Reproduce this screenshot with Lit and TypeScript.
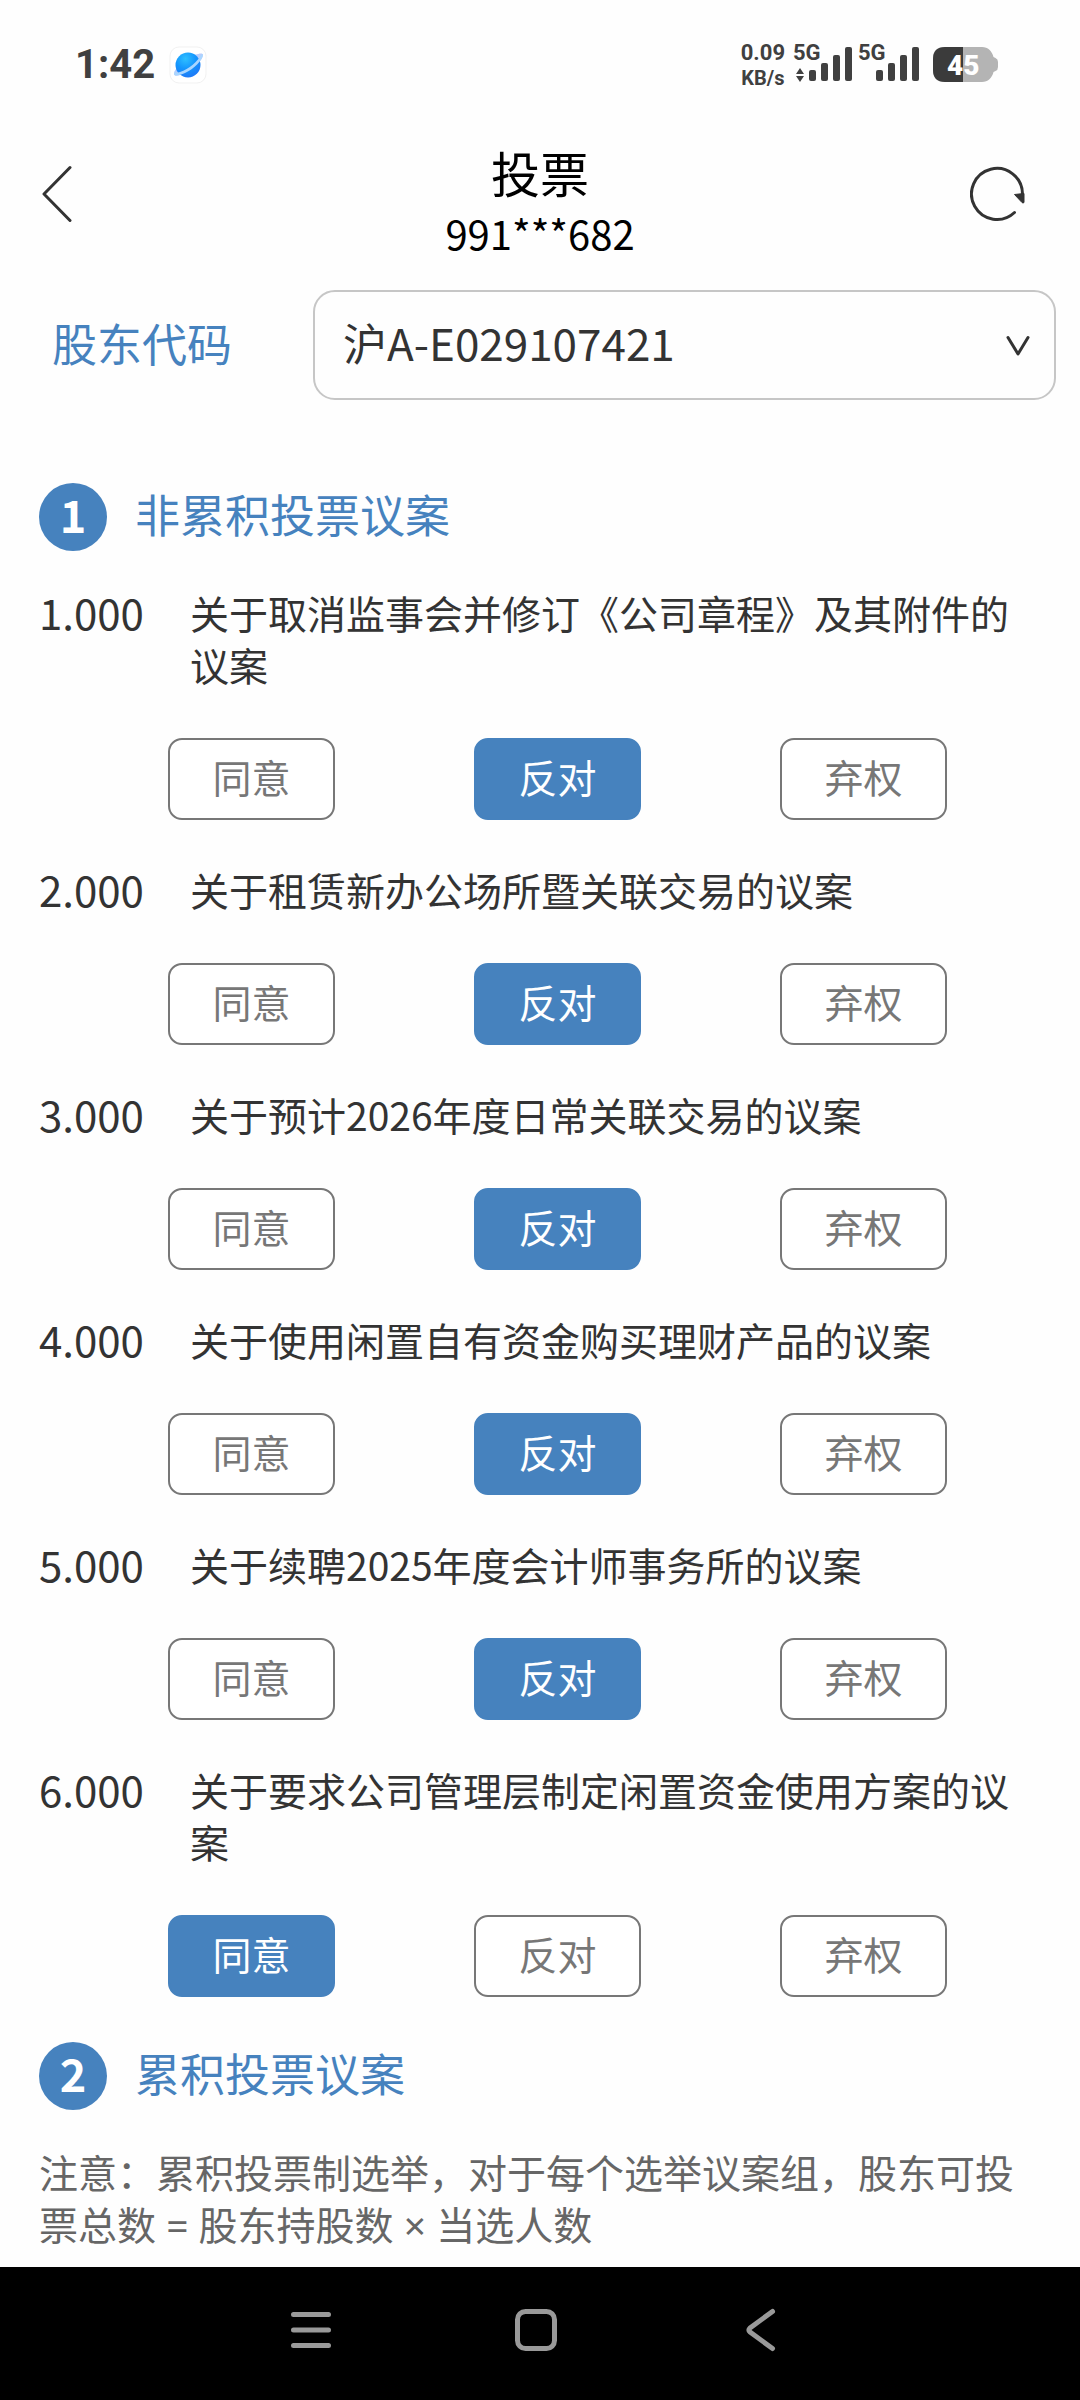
import { LitElement, html, css, svg } from "lit";
import { customElement, property, state } from "lit/decorators.js";
import { classMap } from "lit/directives/class-map.js";

type Choice = "同意" | "反对" | "弃权";

interface Proposal {
  no: string;
  title: string;
  choice: Choice;
}

const CHOICES: Choice[] = ["同意", "反对", "弃权"];

@customElement("status-bar")
class StatusBar extends LitElement {
  static styles = css`
    :host {
      display: flex;
      align-items: center;
      justify-content: space-between;
      height: 130px;
      padding: 0 81px 0 75px;
      color: #404040;
      font-family: Roboto, sans-serif;
      font-weight: 700;
    }
    .left,
    .right {
      display: flex;
      align-items: center;
    }
    .left {
      gap: 14px;
    }
    .time {
      font-size: 40px;
      line-height: 48px;
    }
    .speed {
      display: flex;
      flex-direction: column;
      align-items: center;
      padding-right: 8px;
      font-size: 22px;
      line-height: 26px;
    }
    .unit {
      font-size: 20px;
      line-height: 24px;
    }
    .signal {
      margin-right: 6px;
    }
    .battery {
      margin-left: 8px;
    }
    svg {
      display: block;
      font-family: inherit;
    }
  `;

  private bars(x: number) {
    return svg`
      <rect x=${x} y="29" width="7" height="11" rx="2" />
      <rect x=${x + 12} y="22" width="7" height="18" rx="2" />
      <rect x=${x + 24} y="14" width="7" height="26" rx="2" />
      <rect x=${x + 36} y="6" width="7" height="34" rx="2" />`;
  }

  render() {
    return html`
      <div class="left">
        <span class="time">1:42</span>
        <svg width="38" height="38" viewBox="0 0 38 38" aria-hidden="true">
          <defs>
            <radialGradient id="globe" cx="0.4" cy="0.25" r="0.8">
              <stop offset="0" stop-color="#2fc0ff" />
              <stop offset="0.5" stop-color="#1496fd" />
              <stop offset="1" stop-color="#1f76f6" />
            </radialGradient>
          </defs>
          <rect x="1" y="1" width="36" height="36" rx="9" fill="#fff" stroke="#f1f1f1" />
          <path d="M26 9c5-2 8-2 8 0 0 5-9 14-18 18-6 3-11 4-11 1 0-2 1-4 3-6z" fill="#b9cdfb" />
          <circle cx="19" cy="19" r="12.5" fill="url(#globe)" />
          <path d="M6 25c0 2 2 2 5 1 9-3 18-11 21-17l2-1c0 6-9 15-18 19-6 3-11 3-11 1z" fill="#a9d6ff" />
        </svg>
      </div>
      <div class="right">
        <div class="speed"><span>0.09</span><span class="unit">KB/s</span></div>
        <svg class="signal" width="59" height="72" viewBox="0 -12 59 72" fill="#404040">
          <text x="0" y="19" font-size="22">5G</text>
          <path d="M7 27l4 6h-8zM7 41l4-6h-8z" />
          ${this.bars(16)}
        </svg>
        <svg class="signal" width="61" height="72" viewBox="0 -12 61 72" fill="#404040">
          <text x="0" y="19" font-size="22">5G</text>
          ${this.bars(18)}
        </svg>
        <svg class="battery" width="66" height="52" viewBox="0 -8 66 52">
          <path d="M12 0h37c6 0 10 4 11.500 10l2 1q2.500 1 2.500 4v5q0 3-2.500 4l-2 1c-1.500 6-5.500 10-11.500 10h-37q-12 0-12-12v-11q0-12 12-12z" fill="#b4b4b4" />
          <path d="M12 0h18v35h-18q-12 0-12-12v-11q0-12 12-12z" fill="#3b3b3b" />
          <text x="14" y="28" font-size="28" font-weight="900" fill="#fff">45</text>
        </svg>
      </div>
    `;
  }
}

@customElement("page-header")
class PageHeader extends LitElement {
  static styles = css`
    :host {
      display: grid;
      grid-template-columns: 1fr auto 1fr;
      align-items: start;
      padding: 12px 42px 28px;
      color: #000;
    }
    .titles {
      text-align: center;
      line-height: 60px;
    }
    h1 {
      margin: 0;
      font-size: 49px;
      font-weight: 400;
    }
    p {
      margin: 0;
      font-size: 40px;
      line-height: 62px;
    }
    button {
      display: block;
      padding: 23px 0;
      border: 0;
      background: none;
      cursor: pointer;
    }
    .refresh {
      justify-self: end;
      padding-right: 12px;
    }
    svg {
      display: block;
    }
  `;

  render() {
    return html`
      <button type="button" aria-label="返回">
        <svg width="32" height="58" viewBox="0 0 32 58" fill="none" stroke="#333" stroke-width="3" stroke-linecap="round" stroke-linejoin="round">
          <path d="M28 2.500L2 29l26 26.500" />
        </svg>
      </button>
      <div class="titles">
        <h1>投票</h1>
        <p>991***682</p>
      </div>
      <button class="refresh" type="button" aria-label="刷新">
        <svg width="56" height="58" viewBox="0 0 56 58">
          <path d="M44.500 47.500A25.500 25.500 0 1 1 52.500 29" fill="none" stroke="#333" stroke-width="3" stroke-linecap="round" />
          <path d="M44.500 29.500l9.500-1v9q-1 1-2 0z" fill="#333" stroke="#333" stroke-linejoin="round" />
        </svg>
      </button>
    `;
  }
}

@customElement("section-title")
class SectionTitle extends LitElement {
  @property() index = "";
  @property() label = "";

  static styles = css`
    :host {
      display: flex;
      align-items: center;
      gap: 28px;
      color: #4682be;
    }
    .badge {
      display: flex;
      justify-content: center;
      box-sizing: border-box;
      width: 68px;
      height: 68px;
      border-radius: 50%;
      background: #4682be;
      color: #fff;
      font-size: 45px;
      font-weight: 700;
      line-height: 62px;
    }
    h2 {
      margin: 0;
      font-size: 45px;
      font-weight: 400;
      line-height: 60px;
      padding-bottom: 6px;
    }
  `;

  render() {
    return html`<span class="badge">${this.index}</span><h2>${this.label}</h2>`;
  }
}

@customElement("proposal-item")
class ProposalItem extends LitElement {
  @property({ attribute: false }) proposal!: Proposal;
  @state() private picked?: Choice;

  static styles = css`
    :host {
      display: block;
      color: #333;
    }
    .head {
      display: grid;
      grid-template-columns: 151px 1fr;
      line-height: 52px;
    }
    .no {
      font-size: 42px;
    }
    h3 {
      margin: 0;
      font-size: 39px;
      font-weight: 400;
    }
    .choices {
      display: flex;
      justify-content: space-between;
      margin-top: 48px;
      padding: 0 85px 0 129px;
    }
    .choice {
      width: 167px;
      height: 82px;
      padding: 0 0 6px;
      border: 2px solid #777;
      border-radius: 14px;
      background: #fff;
      color: #777;
      font: inherit;
      font-size: 39px;
      line-height: 52px;
      cursor: pointer;
    }
    .choice.on {
      border-color: #4682be;
      background: #4682be;
      color: #fff;
    }
  `;

  render() {
    const current = this.picked ?? this.proposal.choice;
    return html`
      <div class="head">
        <span class="no">${this.proposal.no}</span>
        <h3>${this.proposal.title}</h3>
      </div>
      <div class="choices" role="group" aria-label=${this.proposal.title}>
        ${CHOICES.map(
          (c) => html`<button
            type="button"
            class=${classMap({ choice: true, on: c === current })}
            aria-pressed=${c === current ? "true" : "false"}
            @click=${() => (this.picked = c)}
          >${c}</button>`
        )}
      </div>
    `;
  }
}

@customElement("system-nav")
class SystemNav extends LitElement {
  static styles = css`
    :host {
      display: flex;
      align-items: center;
      justify-content: center;
      gap: 177px;
      height: 133px;
      box-sizing: border-box;
      padding: 0 8px 8px 0;
      background: #000;
    }
    button {
      padding: 0;
      border: 0;
      background: none;
    }
    svg {
      display: block;
      fill: none;
      stroke: #999;
      stroke-width: 5;
      stroke-linecap: round;
      stroke-linejoin: round;
    }
  `;

  render() {
    return html`
      <button type="button" aria-label="最近任务">
        <svg width="48" height="48" viewBox="0 0 48 48"><path d="M6.500 8.500h35M6.500 24h35M6.500 39.500h35" /></svg>
      </button>
      <button type="button" aria-label="主屏幕">
        <svg width="48" height="48" viewBox="0 0 48 48"><rect x="5.500" y="5.500" width="37" height="37" rx="8" /></svg>
      </button>
      <button type="button" aria-label="返回">
        <svg width="48" height="48" viewBox="0 0 48 48"><path d="M35.500 5.500L13 22q-2 2 0 4l22.500 16.500" /></svg>
      </button>
    `;
  }
}

@customElement("app-root")
class AppRoot extends LitElement {
  private proposals: Proposal[] = [
    { no: "1.000", title: "关于取消监事会并修订《公司章程》及其附件的议案", choice: "反对" },
    { no: "2.000", title: "关于租赁新办公场所暨关联交易的议案", choice: "反对" },
    { no: "3.000", title: "关于预计2026年度日常关联交易的议案", choice: "反对" },
    { no: "4.000", title: "关于使用闲置自有资金购买理财产品的议案", choice: "反对" },
    { no: "5.000", title: "关于续聘2025年度会计师事务所的议案", choice: "反对" },
    { no: "6.000", title: "关于要求公司管理层制定闲置资金使用方案的议案", choice: "同意" },
  ];

  static styles = css`
    :host {
      display: flex;
      flex-direction: column;
      min-height: 100vh;
      background: #fefefe;
      font-family: "Noto Sans CJK SC", sans-serif;
    }
    .account {
      display: grid;
      grid-template-columns: 261px 1fr;
      align-items: center;
      padding: 0 24px 0 52px;
      margin-top: -2px;
    }
    .account label {
      color: #4682be;
      font-size: 45px;
      line-height: 60px;
      padding-bottom: 4px;
    }
    .picker {
      position: relative;
    }
    select {
      display: block;
      width: 100%;
      height: 110px;
      box-sizing: border-box;
      padding: 0 80px 6px 28px;
      border: 2px solid #c6c6c6;
      border-radius: 22px;
      appearance: none;
      background: #fefefe;
      color: #333;
      font-family: inherit;
      font-size: 44px;
    }
    .arrow {
      position: absolute;
      right: 26px;
      top: 45px;
      pointer-events: none;
    }
    main {
      display: flex;
      flex-direction: column;
      flex: 1;
      padding: 83px 48px 16px 39px;
    }
    .list {
      display: flex;
      flex-direction: column;
      gap: 43px;
      padding: 35px 0 45px;
    }
    .note {
      margin: 37px 0 0;
      color: #666;
      font-family: "Noto Sans", "Noto Sans CJK SC", sans-serif;
      font-size: 39px;
      line-height: 52px;
    }
  `;

  render() {
    return html`
      <status-bar></status-bar>
      <page-header></page-header>
      <div class="account">
        <label for="holder">股东代码</label>
        <div class="picker">
          <select id="holder">
            <option>沪A-E029107421</option>
          </select>
          <svg class="arrow" width="24" height="22" viewBox="0 0 24 22" fill="none" stroke="#333" stroke-width="3" stroke-linecap="round" stroke-linejoin="round" aria-hidden="true">
            <path d="M2 2.500L12 19 22 2.500" />
          </svg>
        </div>
      </div>
      <main>
        <section-title index="1" label="非累积投票议案"></section-title>
        <div class="list">
          ${this.proposals.map((p) => html`<proposal-item .proposal=${p}></proposal-item>`)}
        </div>
        <section-title index="2" label="累积投票议案"></section-title>
        <p class="note">注意：累积投票制选举，对于每个选举议案组，股东可投票总数 = 股东持股数 × 当选人数</p>
      </main>
      <system-nav></system-nav>
    `;
  }
}
